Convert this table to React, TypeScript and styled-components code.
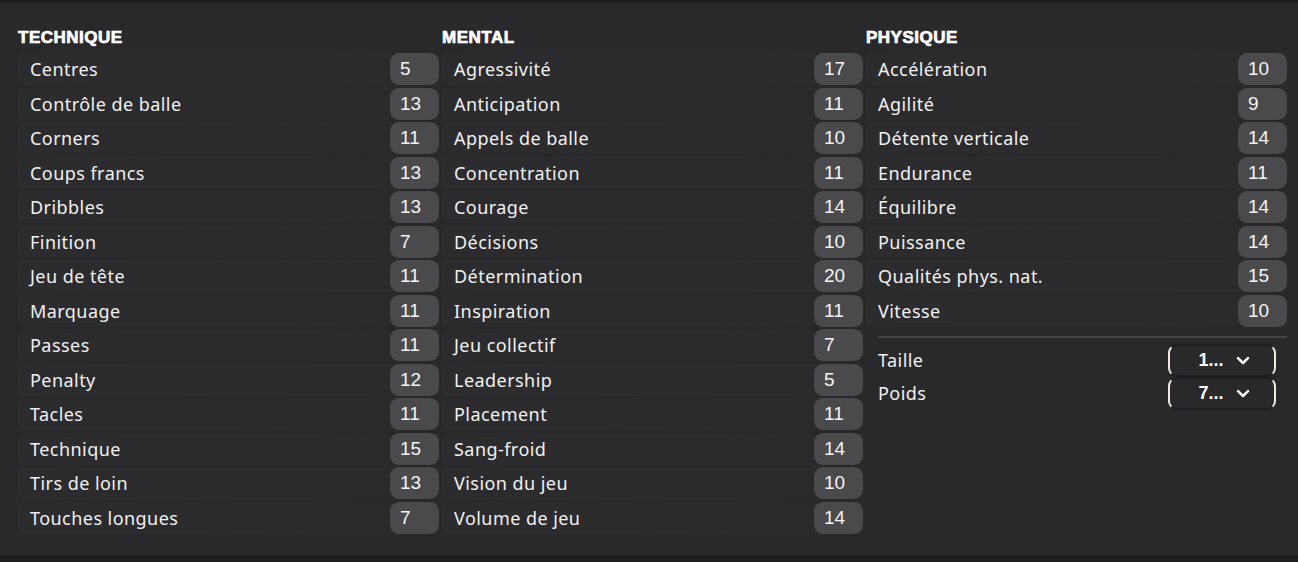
import React from "react";
import styled, { createGlobalStyle } from "styled-components";

const Global = createGlobalStyle`
  html, body { margin: 0; padding: 0; background: #29282b; }
  body { font-family: "Noto Sans", "Liberation Sans", sans-serif; color: #f2f2f2; }
`;

const Page = styled.div`
  width: 1298px;
  height: 562px;
  box-sizing: border-box;
  background: #29282b;
  border-top: 3px solid #1f1e20;
  display: flex;
  flex-direction: column;
`;

const Body = styled.div`
  flex: 1;
  display: grid;
  grid-template-columns: 421px 421px 421px;
  column-gap: 3px;
  padding: 26px 0 0 18px;
`;

const Footer = styled.div`
  height: 7px;
  background: #1e1d1f;
`;

const Column = styled.div`
  display: flex;
  flex-direction: column;
`;

const Heading = styled.div`
  font-family: "Liberation Sans", Arial, sans-serif;
  font-weight: 700;
  font-size: 17px;
  letter-spacing: 0.5px;
  height: 24px;
  line-height: 18px;
  color: #ffffff;
  -webkit-text-stroke: 0.7px #ffffff;
`;

const Rows = styled.div`
  display: flex;
  flex-direction: column;
  gap: 2.5px;
`;

const Row = styled.div`
  height: 32px;
  display: flex;
  align-items: center;
  background: linear-gradient(90deg, #2c2b2e 0%, #2b2a2d 60%, #2a292c 100%);
  border-radius: 7px 0 0 7px;
`;

const Label = styled.div`
  flex: 1;
  padding-left: 12px;
  font-size: 18px;
  color: #f1f1f1;
  letter-spacing: 0.45px;
`;

const Badge = styled.div`
  width: 49px;
  height: 32px;
  box-sizing: border-box;
  padding-left: 10px;
  border-radius: 9px;
  background: #4a494c;
  display: flex;
  align-items: center;
  font-family: "Liberation Sans", Arial, sans-serif;
  font-size: 19px;
  color: #f4f4f4;
`;

const Separator = styled.div`
  height: 2px;
  background: #444346;
  margin: 9px 0 6px 12px;
`;

const InfoRow = styled.div`
  height: 33px;
  display: flex;
  align-items: center;
`;

const Select = styled.div`
  width: 108px;
  height: 33px;
  box-sizing: border-box;
  margin-right: 11px;
  border: 2px solid #1f1e21;
  border-left-color: #eeeae2;
  border-right-color: #eeeae2;
  border-radius: 9px;
  display: flex;
  align-items: center;
  justify-content: center;
  gap: 12px;
  padding-left: 4px;
  font-family: "Liberation Sans", Arial, sans-serif;
  font-weight: 700;
  font-size: 18px;
  color: #ffffff;
`;

const technique: [string, number][] = [
  ["Centres", 5],
  ["Contrôle de balle", 13],
  ["Corners", 11],
  ["Coups francs", 13],
  ["Dribbles", 13],
  ["Finition", 7],
  ["Jeu de tête", 11],
  ["Marquage", 11],
  ["Passes", 11],
  ["Penalty", 12],
  ["Tacles", 11],
  ["Technique", 15],
  ["Tirs de loin", 13],
  ["Touches longues", 7],
];

const mental: [string, number][] = [
  ["Agressivité", 17],
  ["Anticipation", 11],
  ["Appels de balle", 10],
  ["Concentration", 11],
  ["Courage", 14],
  ["Décisions", 10],
  ["Détermination", 20],
  ["Inspiration", 11],
  ["Jeu collectif", 7],
  ["Leadership", 5],
  ["Placement", 11],
  ["Sang-froid", 14],
  ["Vision du jeu", 10],
  ["Volume de jeu", 14],
];

const physique: [string, number][] = [
  ["Accélération", 10],
  ["Agilité", 9],
  ["Détente verticale", 14],
  ["Endurance", 11],
  ["Équilibre", 14],
  ["Puissance", 14],
  ["Qualités phys. nat.", 15],
  ["Vitesse", 10],
];

const Chevron = () => (
  <svg width="14" height="9" viewBox="0 0 14 9">
    <path d="M2 2.2 L7 7 L12 2.2" fill="none" stroke="#ffffff" strokeWidth="2.5" strokeLinecap="round" strokeLinejoin="round" />
  </svg>
);

const AttrList = ({ items }: { items: [string, number][] }) => (
  <Rows>
    {items.map(([name, v]) => (
      <Row key={name}>
        <Label>{name}</Label>
        <Badge>{v}</Badge>
      </Row>
    ))}
  </Rows>
);

export default function App() {
  return (
    <Page>
      <Global />
      <Body>
        <Column>
          <Heading>TECHNIQUE</Heading>
          <AttrList items={technique} />
        </Column>
        <Column>
          <Heading>MENTAL</Heading>
          <AttrList items={mental} />
        </Column>
        <Column>
          <Heading>PHYSIQUE</Heading>
          <AttrList items={physique} />
          <Separator />
          <InfoRow>
            <Label>Taille</Label>
            <Select>
              <span>1...</span>
              <Chevron />
            </Select>
          </InfoRow>
          <InfoRow>
            <Label>Poids</Label>
            <Select>
              <span>7...</span>
              <Chevron />
            </Select>
          </InfoRow>
        </Column>
      </Body>
      <Footer />
    </Page>
  );
}
